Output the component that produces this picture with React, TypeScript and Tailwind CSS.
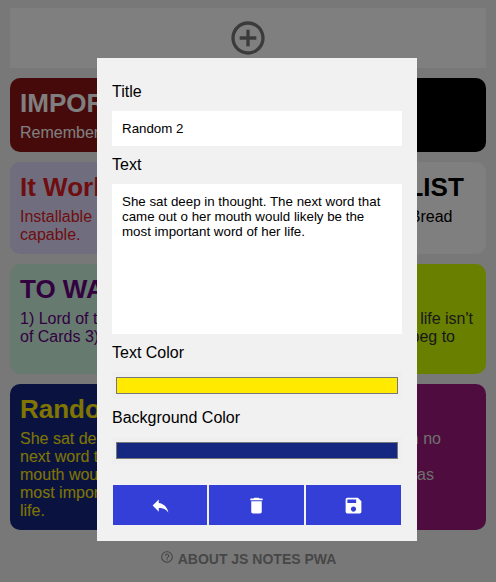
import React from "react";
import { MdAddCircleOutline, MdDelete, MdHelpOutline, MdReply, MdSave } from "react-icons/md";

type NoteProps = { title: string; lines: string[]; className: string };

function Note({ title, lines, className }: NoteProps) {
  return (
    <article className={`w-[233px] overflow-hidden rounded-[10px] px-[10px] pt-[10px] ${className}`}>
      <h2 className="h-[30px] text-[26px] leading-[30px] font-bold whitespace-nowrap">{title}</h2>
      <div className="mt-[6px] text-[16px] leading-[18px] whitespace-nowrap">
        {lines.map((line, i) => (
          <p key={i} className="h-[18px]">{line}</p>
        ))}
      </div>
    </article>
  );
}

function EndNote({ lines, className }: { lines: { text: string; pad: string }[]; className: string }) {
  return (
    <article className={`w-[233px] overflow-hidden rounded-[10px] pt-[46px] text-right text-[16px] leading-[18px] whitespace-nowrap ${className}`}>
      {lines.map((line, i) => (
        <p key={i} className={`h-[18px] ${line.pad}`}>{line.text}</p>
      ))}
    </article>
  );
}

function Swatch({ color }: { color: string }) {
  return (
    <div className="mt-[10px] h-[27px] w-[290px] bg-[#efefef] px-[4px] py-[5px]">
      <div className={`h-[17px] border border-[#777] ${color}`} />
    </div>
  );
}

const button = "flex h-[40px] items-center justify-center bg-[#333fd6] text-white";

export default function App() {
  return (
    <div className="relative h-[582px] w-[496px] overflow-hidden bg-[#f1f1f1] font-['Liberation_Sans',Arial,sans-serif] text-black">
      <main className="flex flex-col gap-[10px] px-[10px] pt-[8px]">
        <div className="flex h-[60px] items-center justify-center bg-white text-[#777]">
          <MdAddCircleOutline size={40} />
        </div>
        <div className="flex h-[74px] gap-[10px]">
          <Note title="IMPORTANT" lines={["Remember"]} className="bg-[#8c1414] text-white" />
          <EndNote lines={[]} className="bg-black" />
        </div>
        <div className="flex h-[92px] gap-[10px]">
          <Note title="It Works" lines={["Installable and", "capable."]} className="bg-[#e0daff] text-[#dd1c1c]" />
          <Note title="SHOPPING LIST" lines={["Milk, Eggs, Cheese, Bread"]} className="bg-white text-black" />
        </div>
        <div className="flex h-[110px] gap-[10px]">
          <Note title="TO WATCH" lines={["1) Lord of the Rings 2) House", "of Cards 3) Dark"]} className="bg-[#ccf5e1] text-[#660080]" />
          <EndNote
            lines={[{ text: "life isn't", pad: "pr-[13px]" }, { text: "beg to", pad: "pr-[31px]" }]}
            className="bg-[#d0ff00] text-[#333]"
          />
        </div>
        <div className="flex h-[146px] gap-[10px]">
          <Note
            title="Random 2"
            lines={["She sat deep in thought. The", "next word that came out o her", "mouth would likely be the", "most important word of her", "life."]}
            className="bg-[#152780] text-[#ffea00]"
          />
          <EndNote
            lines={[{ text: "with no", pad: "pr-[45px]" }, { text: "", pad: "" }, { text: "was", pad: "pr-[52px]" }]}
            className="bg-[#9c1a7d] text-[#ddd]"
          />
        </div>
      </main>
      <footer className="mt-[20px] flex justify-center text-[14px] leading-[18px] font-bold text-[#8f8f8f]">
        <MdHelpOutline size={14} className="mr-[4px]" />
        <span>ABOUT JS NOTES PWA</span>
      </footer>

      <div className="absolute inset-0 flex items-start justify-center bg-black/50 pt-[58px] pl-[18px]">
        <section className="h-[483px] w-[320px] bg-[#f1f1f1] px-[15px] pt-[25px]">
          <div className="text-[16px] leading-[18px]">Title</div>
          <div className="mt-[10px] flex h-[35px] w-[290px] items-center bg-white px-[10px] text-[13.333px] leading-[15px]">Random 2</div>
          <div className="mt-[10px] text-[16px] leading-[18px]">Text</div>
          <div className="mt-[10px] h-[150px] w-[290px] bg-white p-[10px] text-[13.333px] leading-[15px] whitespace-nowrap">
            <p>She sat deep in thought. The next word that</p>
            <p>came out o her mouth would likely be the</p>
            <p>most important word of her life.</p>
          </div>
          <div className="mt-[10px] text-[16px] leading-[18px]">Text Color</div>
          <Swatch color="bg-[#ffea00]" />
          <div className="mt-[10px] text-[16px] leading-[18px]">Background Color</div>
          <Swatch color="bg-[#152780]" />
          <div className="mt-[21px] ml-[1px] flex gap-[2px]">
            <button className={`w-[94px] ${button}`}><MdReply size={21} /></button>
            <button className={`w-[95px] ${button}`}><MdDelete size={21} /></button>
            <button className={`w-[95px] ${button}`}><MdSave size={21} /></button>
          </div>
        </section>
      </div>
    </div>
  );
}
